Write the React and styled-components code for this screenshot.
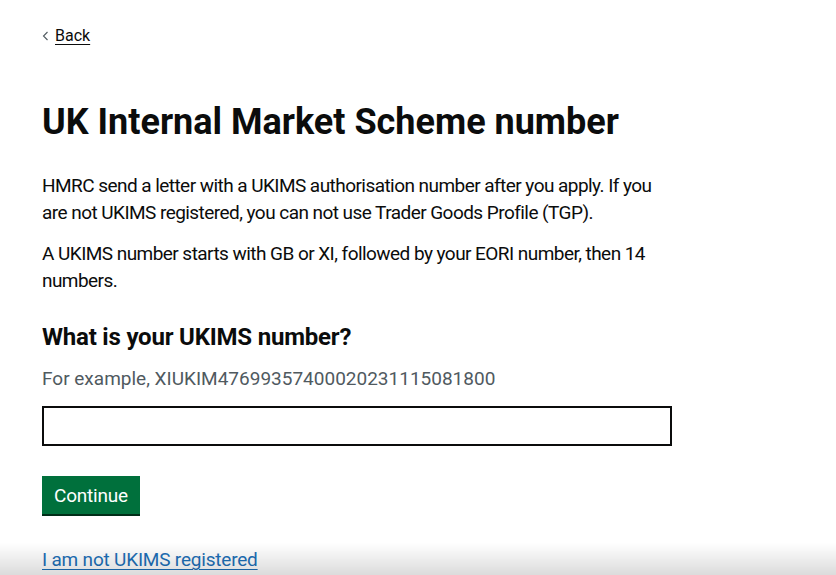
import React from "react";
import styled, { createGlobalStyle } from "styled-components";

const GlobalStyle = createGlobalStyle`
  html, body {
    margin: 0;
    padding: 0;
    background: #ffffff;
  }
  body {
    font-family: Roboto, "Liberation Sans", Arial, sans-serif;
    color: #0b0c0c;
    -webkit-font-smoothing: antialiased;
  }
`;

const Page = styled.div`
  padding: 26px 42px 0 42px;
  min-height: 575px;
  box-sizing: border-box;
`;

const BackLink = styled.a`
  display: inline-flex;
  align-items: center;
  gap: 6px;
  font-size: 16px;
  line-height: 20px;
  color: #0b0c0c;
  cursor: pointer;
  span {
    text-decoration: underline;
    text-underline-offset: 3px;
    text-decoration-thickness: 1px;
  }
`;

const Main = styled.main`
  width: 630px;
  padding-top: 56px;
`;

const Heading = styled.h1`
  margin: 0 0 30px 0;
  font-size: 36px;
  line-height: 40px;
  font-weight: 700;
`;

const Body = styled.p`
  margin: 0 0 14px 0;
  font-size: 19px;
  line-height: 27px;
  font-weight: 400;
  letter-spacing: -0.55px;
`;

const Label = styled.label`
  display: block;
  margin: 28px 0 14px 0;
  font-size: 24px;
  line-height: 30px;
  font-weight: 700;
  letter-spacing: -0.2px;
`;

const Hint = styled.div`
  margin-bottom: 15px;
  font-size: 19px;
  line-height: 25px;
  color: #505a5f;
`;

const Input = styled.input`
  display: block;
  box-sizing: border-box;
  width: 630px;
  height: 40px;
  margin: 0 0 30px 0;
  padding: 5px;
  border: 2px solid #0b0c0c;
  border-radius: 0;
  font-family: inherit;
  font-size: 19px;
  outline: none;
`;

const Button = styled.button`
  display: block;
  box-sizing: border-box;
  height: 38px;
  padding: 0 10px;
  margin: 0 0 33px 0;
  border: 2px solid transparent;
  border-radius: 0;
  background: #00703c;
  box-shadow: 0 2px 0 #002d18;
  color: #ffffff;
  font-family: inherit;
  font-size: 19px;
  line-height: 1;
  letter-spacing: -0.2px;
  cursor: pointer;
`;

const TextLink = styled.a`
  font-size: 19px;
  line-height: 25px;
  color: #1d70b8;
  text-decoration: underline;
  text-underline-offset: 3px;
  text-decoration-thickness: 1px;
  letter-spacing: -0.2px;
  cursor: pointer;
`;

const BottomFade = styled.div`
  position: fixed;
  left: 0;
  right: 0;
  bottom: 0;
  height: 32px;
  pointer-events: none;
  background: linear-gradient(to bottom, rgba(0, 0, 0, 0), rgba(0, 0, 0, 0.14));
`;

const Chevron = () => (
  <svg width="7" height="10" viewBox="0 0 7 10" aria-hidden="true">
    <polyline points="5.5,1 1.5,5 5.5,9" fill="none" stroke="#505a5f" strokeWidth="1.1" />
  </svg>
);

export default function App() {
  return (
    <>
      <GlobalStyle />
      <Page>
        <BackLink>
          <Chevron />
          <span>Back</span>
        </BackLink>
        <Main>
          <Heading>UK Internal Market Scheme number</Heading>
          <Body>
            HMRC send a letter with a UKIMS authorisation number after you apply. If you are not
            UKIMS registered, you can not use Trader Goods Profile (TGP).
          </Body>
          <Body>
            A UKIMS number starts with GB or XI, followed by your EORI number, then 14 numbers.
          </Body>
          <Label htmlFor="ukims">What is your UKIMS number?</Label>
          <Hint>For example, XIUKIM47699357400020231115081800</Hint>
          <Input id="ukims" type="text" />
          <Button>Continue</Button>
          <TextLink>I am not UKIMS registered</TextLink>
        </Main>
      </Page>
      <BottomFade />
    </>
  );
}
